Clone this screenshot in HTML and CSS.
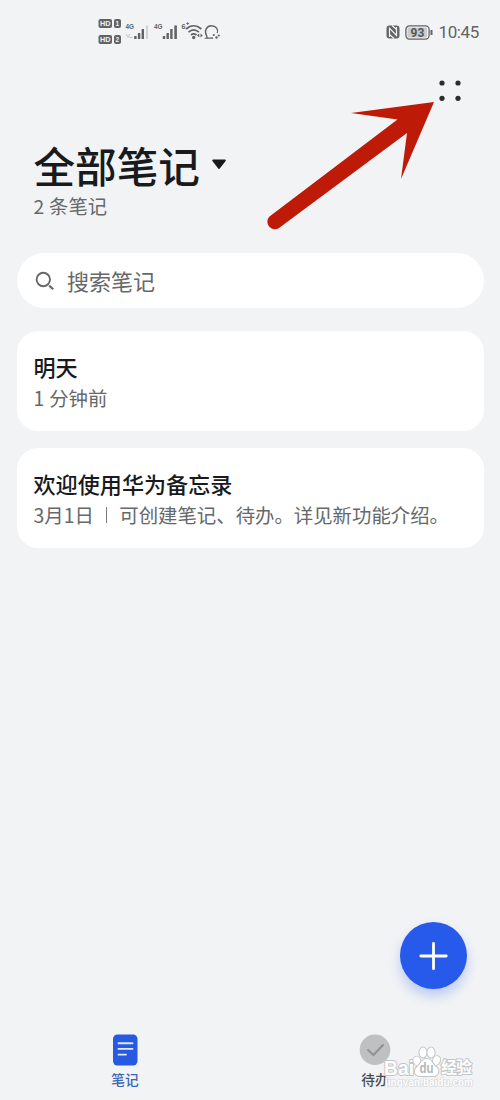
FILE: index.html
```html
<!DOCTYPE html>
<html lang="zh-CN">
<head>
<meta charset="utf-8">
<title>全部笔记</title>
<link rel="stylesheet" href="styles.css">
</head>
<body>
<div class="screen">
  <header class="status">
    <svg class="status-left" width="124" height="30" viewBox="0 0 124 30">
      <g fill="#626365">
        <rect x="0.500" y="1" width="13.500" height="9" rx="2"/><rect x="16" y="1" width="7" height="9" rx="2"/>
        <rect x="0.500" y="17" width="13.500" height="9" rx="2"/><rect x="16" y="17" width="7" height="9" rx="2"/>
      </g>
      <g class="badge-text">
        <text x="2" y="8.200" textLength="10.500" lengthAdjust="spacingAndGlyphs">HD</text><text x="17.600" y="8.200">1</text>
        <text x="2" y="24.200" textLength="10.500" lengthAdjust="spacingAndGlyphs">HD</text><text x="17.600" y="24.200">2</text>
      </g>
      <g class="net-text"><text x="27.500" y="11" textLength="8.500" lengthAdjust="spacingAndGlyphs">4G</text><text x="56" y="11" textLength="8.500" lengthAdjust="spacingAndGlyphs">4G</text><text x="83.500" y="10.500" textLength="4" lengthAdjust="spacingAndGlyphs">6</text></g>
      <path d="M89.700 4v3M88.200 5.500h3" stroke="#626365" stroke-width=".8"/>
      <g fill="#626365">
        <rect x="36.200" y="18" width="2.400" height="3"/><rect x="39.900" y="15" width="2.400" height="6"/><rect x="43.600" y="11" width="2.400" height="10"/><rect x="48" y="7.500" width="2" height="13.500" opacity=".22"/>
        <rect x="64.800" y="18" width="2.400" height="3"/><rect x="68.500" y="15" width="2.400" height="6"/><rect x="72.200" y="11" width="2.400" height="10"/><rect x="76.300" y="7.500" width="2.600" height="13.500"/>
      </g>
      <path d="M28 16l2 3.500 2-3.500M31.500 19.500h3" fill="none" stroke="#c4c5c7" stroke-width="1"/>
      <g fill="none" stroke="#626365" stroke-width="1.700">
        <path d="M88 11c4.800-4.300 10.600-4.300 15.400 0M90.500 14.200c3.200-2.800 7.200-2.800 10.400 0M93 17c1.700-1.500 3.800-1.500 5.500 0"/>
      </g>
      <circle cx="95.700" cy="19.500" r="1.700" fill="#626365"/>
      <path d="M101.300 15.500l-2.300 2 2.300 2zM102.500 15.500l2.300 2-2.300 2z" fill="#626365"/>
      <path d="M115 20c-2 .3-4 .1-6.700.1 1.300-1 .9-1.600.2-2.600-2.600-4.800.2-9.700 5-9.700 4.700 0 7.200 4 5.700 7.200" fill="none" stroke="#626365" stroke-width="1.400"/>
      <circle cx="115.800" cy="17" r="1.100" fill="#626365"/><circle cx="120.800" cy="17.500" r="1.100" fill="#626365"/><circle cx="118.500" cy="19.500" r="1.200" fill="#626365"/>
    </svg>
    <div class="status-right">
      <svg width="14" height="14" viewBox="0 0 14 14">
        <rect x=".5" y=".5" width="13" height="13" rx="3" fill="#626365"/>
        <path d="M3.500 12V3.200L10.500 10.500V2M6 .5l4.500 4M3.500 9.500l4.500 4" fill="none" stroke="#f1f3f5" stroke-width="1.200"/>
      </svg>
      <svg width="29" height="15" viewBox="0 0 29 15">
        <rect x=".9" y=".9" width="23.200" height="13.200" rx="3.500" fill="#f1f3f5" stroke="#626365" stroke-width="1.300"/>
        <path d="M4 2.500h18v10H4a1.500 1.500 0 0 1-1.500-1.500V4A1.500 1.500 0 0 1 4 2.500z" fill="#c9cbcd"/>
        <path d="M26.500 5v5" stroke="#626365" stroke-width="2"/>
        <text class="battery" x="5.500" y="12" textLength="14">93</text>
      </svg>
      <span class="clock">10:45</span>
    </div>
  </header>

  <div class="toolbar">
    <svg width="24" height="24" viewBox="0 0 24 24" fill="#2b2d30">
      <circle cx="4" cy="4" r="2.600"/><circle cx="20" cy="4" r="2.600"/>
      <circle cx="4" cy="19.300" r="2.600"/><circle cx="20" cy="19.300" r="2.600"/>
    </svg>
  </div>

  <div class="heading">
    <h1>全部笔记</h1>
    <svg width="16" height="12" viewBox="0 0 16 12"><path d="M2.200 1.500h11.600L8 9z" fill="#191a1c" stroke="#191a1c" stroke-width="2" stroke-linejoin="round"/></svg>
  </div>
  <p class="count">2 条笔记</p>

  <div class="search">
    <svg width="20" height="20" viewBox="0 0 20 20" fill="none" stroke="#66686a" stroke-width="1.900"><circle cx="8.300" cy="8.500" r="6.700"/><path d="M14.200 14.600l4 3.600" stroke-width="2.200"/></svg>
    <span>搜索笔记</span>
  </div>

  <article class="note">
    <h2>明天</h2>
    <p>1 分钟前</p>
  </article>
  <article class="note">
    <h2>欢迎使用华为备忘录</h2>
    <p class="summary"><span>3月1日</span><i class="divider"></i><span>可创建笔记、待办。详见新功能介绍。</span></p>
  </article>

  <button class="add" aria-label="新建">
    <svg width="30" height="30" viewBox="0 0 30 30"><path d="M14.500 2.300v25.400M1.800 15h25.400" stroke="#fff" stroke-width="2.800" stroke-linecap="round"/></svg>
  </button>

  <nav class="tabs">
    <div class="tab active">
      <svg width="32" height="32" viewBox="0 0 32 32"><rect x="4" y="0.500" width="24.500" height="31" rx="4.500" fill="#2859e2"/><path d="M9.500 9.200h14M9.500 14.900h14M9.500 20.600h7.500" stroke="#dfe9ff" stroke-width="1.900" stroke-linecap="round"/></svg>
      <span>笔记</span>
    </div>
    <div class="tab">
      <svg width="32" height="32" viewBox="0 0 32 32"><circle cx="16" cy="15.700" r="15.300" fill="#bfc0c2"/><path d="M9 16l5.500 5L24 11" fill="none" stroke="#8f9193" stroke-width="2" stroke-linecap="round"/></svg>
      <span>待办</span>
    </div>
  </nav>

  <svg class="arrow" width="180" height="140" viewBox="0 0 180 140">
    <path class="arrow-shape" d="M174 42L91 53 137.500 59.500 9.500 156.500a7.500 7.500 0 0 0 9.500 11.500L147 73 141 119z" transform="translate(0 -40)"/>
  </svg>

  <svg class="watermark" width="100" height="46" viewBox="0 0 100 46">
    <g class="mark">
      <text class="brand" x="4" y="32.500" textLength="30" lengthAdjust="spacingAndGlyphs">Bai</text>
      <g class="paw"><ellipse cx="37" cy="19" rx="3.400" ry="4.400" transform="rotate(-20 37 19)"/><ellipse cx="43" cy="10.500" rx="3.500" ry="5"/><ellipse cx="51" cy="10.500" rx="3.500" ry="5"/><ellipse cx="56.500" cy="18.500" rx="3.400" ry="4.400" transform="rotate(20 56.500 18.500)"/>
      <path d="M46.500 17c5 0 6 5 9.500 8 4.500 4 2 9-3 9-4 0-9 0-13 0-5 0-7-5-3-9 3.500-3 4.500-8 9.500-8z"/></g>
      <text class="du" x="39.500" y="31" textLength="14" lengthAdjust="spacingAndGlyphs">du</text>
      <text class="brand-cn" x="61" y="30.500" textLength="31">经验</text>
      <text class="site" x="5" y="43.500" textLength="88">jingyan.baidu.com</text>
    </g>
  </svg>
</div>
</body>
</html>
```
FILE: styles.css
```css
* { box-sizing: border-box; }
body { margin: 0; background: #f1f3f5; font-family: "Noto Sans CJK SC", sans-serif; }
h1, h2, p { margin: 0; }
svg { display: block; flex: none; }
.screen { position: relative; width: 500px; height: 1100px; padding: 0 16.500px; display: flex; flex-direction: column; overflow: hidden; }

.status { height: 64px; flex: none; display: flex; justify-content: space-between; align-items: center; padding: 0 5px 0 81.500px; }
.status-left { margin-top: 1px; }
.badge-text { font: bold 6.500px "Liberation Sans", sans-serif; fill: #f1f3f5; }
.net-text { font: bold 8px "Liberation Sans", sans-serif; fill: #626365; }
.status-right { display: flex; align-items: center; gap: 5px; }
.battery { font: bold 12px Roboto, sans-serif; fill: #55575a; }
.clock { font: 17px/20px Roboto, sans-serif; color: #626365; width: 40px; letter-spacing: -.4px; white-space: nowrap; }

.toolbar { height: 73px; flex: none; display: flex; justify-content: flex-end; padding: 15px 21.500px 0 0; }

.heading { height: 56px; flex: none; display: flex; align-items: center; gap: 9px; padding-left: 17px; }
.heading h1 { font-size: 41.600px; line-height: 50px; font-weight: 500; color: #191a1c; width: 168px; }
.heading svg { margin-top: -1px; }
.count { font-size: 19.300px; line-height: 22px; color: #66686a; padding: 2px 0 0 17px; word-spacing: .6px; }

.search { height: 55px; flex: none; margin-top: 36px; border-radius: 28px; background: #fff; display: flex; align-items: center; gap: 12px; padding-left: 18.500px; font-size: 22px; line-height: 32px; color: #66686a; }
.search span { padding-bottom: 2px; }

.note { height: 100px; flex: none; margin-top: 23px; border-radius: 21px; background: #fff; padding: 19px 10px 0 17px; }
.note + .note { margin-top: 17px; }
.note h2 { font-size: 22.100px; line-height: 32px; font-weight: 500; color: #191a1c; }
.note p { font-size: 19.400px; line-height: 31px; color: #66686a; white-space: nowrap; word-spacing: .6px; }
.note .summary { display: flex; align-items: center; }
.divider { width: 1.500px; height: 16px; background: #77797b; margin: 0 12px; }

.add { width: 67px; height: 67px; flex: none; margin: auto 16.500px 0 auto; border: 0; border-radius: 50%; background: #275aea; display: grid; place-items: center; box-shadow: 0 7px 12px rgba(39, 90, 234, .26); }
.tabs { flex: none; height: 111px; margin: 0 -16.500px; padding-top: 45px; display: grid; grid-template-columns: 1fr 1fr; }
.tab { display: flex; flex-direction: column; align-items: center; font-size: 13.700px; line-height: 20px; gap: 3px; color: #4a4b4d; font-weight: 500; }
.active { color: #3b65b6; }

.arrow { position: absolute; left: 260px; top: 100px; overflow: visible; }
.arrow-shape { fill: #bd1a08; }
.watermark { position: absolute; left: 380px; top: 1042px; }
.mark { fill: #fff; stroke: #c3c5c8; stroke-width: 2px; stroke-linejoin: round; paint-order: stroke; }
.brand { font: bold 20px "Liberation Sans", sans-serif; }
.du { font: bold 14px "Liberation Sans", sans-serif; fill: #b5b7ba; stroke: none; }
.brand-cn { font: bold 16px "Noto Sans CJK SC", sans-serif; }
.site { font: bold 10px "Liberation Sans", sans-serif; stroke-width: 1.200px; stroke: #d3d5d8; }
```
